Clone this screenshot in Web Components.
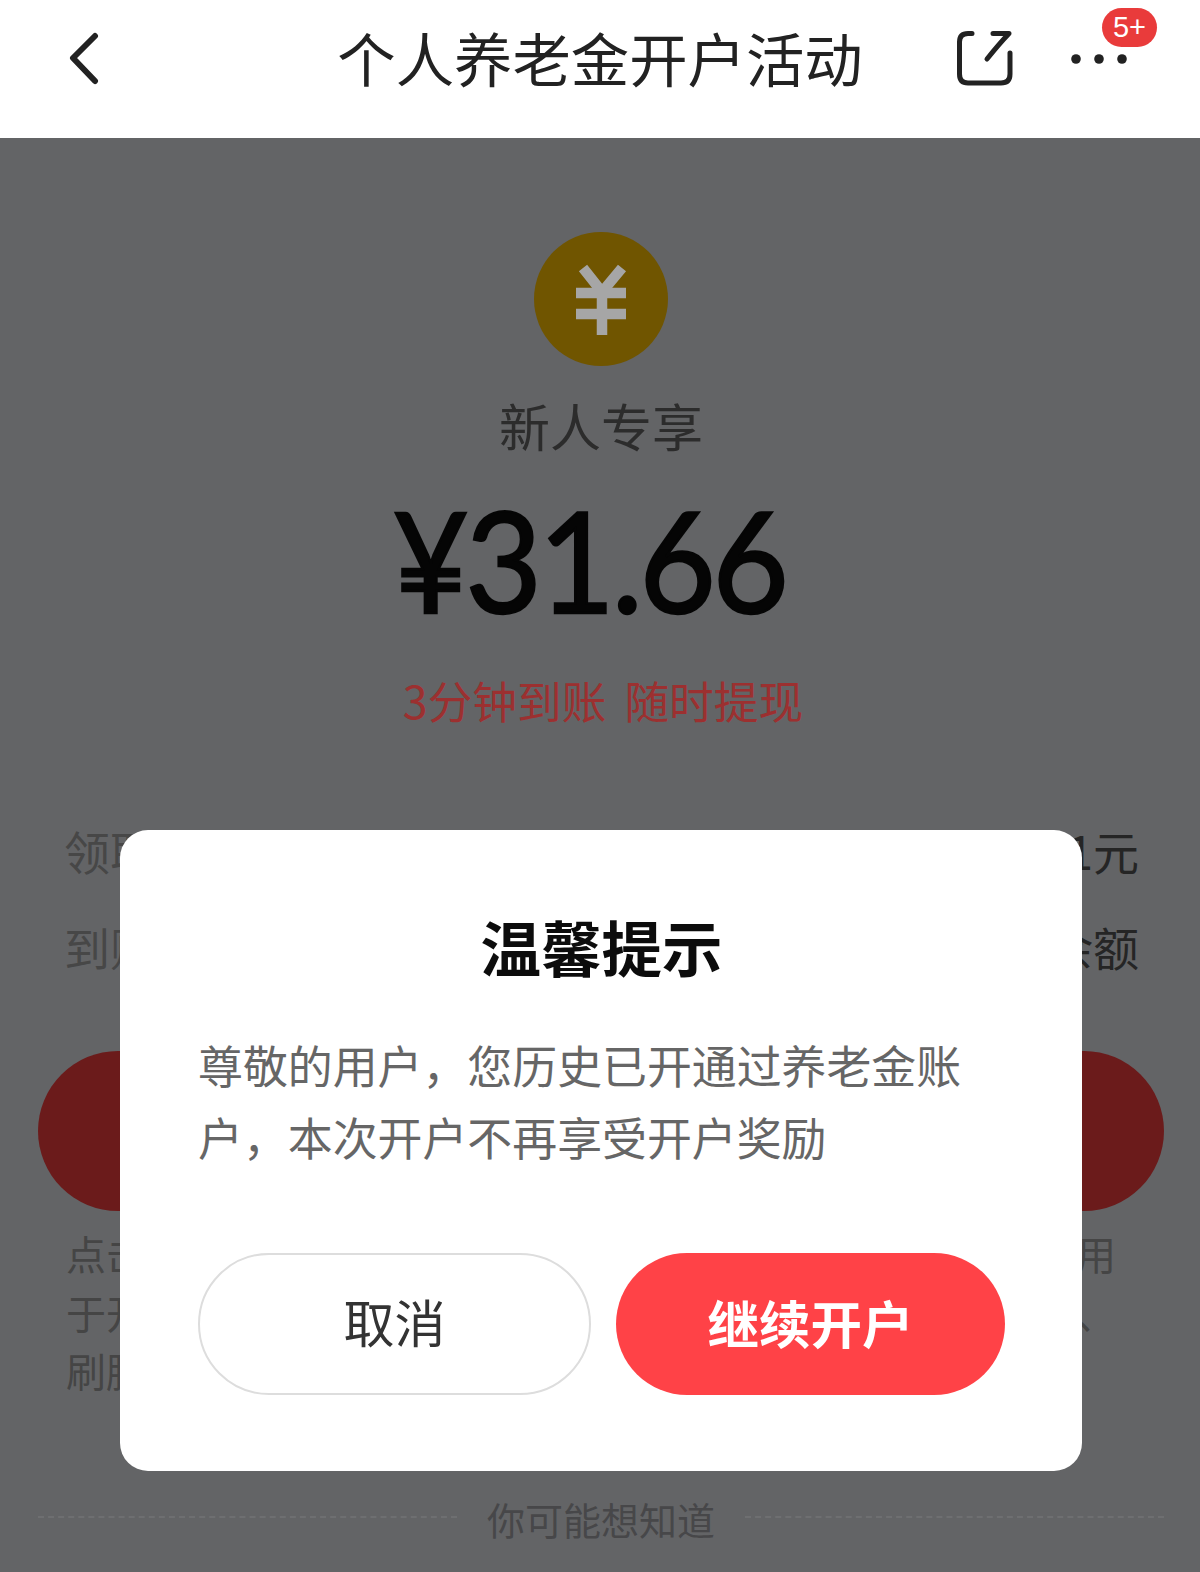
<!doctype html>
<html lang="zh">
<head>
<meta charset="utf-8">
<title>个人养老金开户活动</title>
<style>
	html, body { margin: 0; padding: 0; }
	body {
		width: 1200px;
		height: 1572px;
		overflow: hidden;
		position: relative;
		font-family: "Noto Sans CJK SC", "Noto Sans", sans-serif;
		background: #636466;
	}
</style>
</head>
<body>
	<nav-bar>个人养老金开户活动</nav-bar>
	<promo-hero label="新人专享" amount="¥31.66" note="3分钟到账 随时提现"></promo-hero>
	<info-row first>
		<span slot="start">领取</span>
		<span slot="end">1元</span>
	</info-row>
	<info-row>
		<span slot="start">到账</span>
		<span slot="end">余额</span>
	</info-row>
	<pill-action></pill-action>
	<rule-text>
		<span slot="start">点击</span><span slot="end">用</span>
	</rule-text>
	<rule-text>
		<span slot="start">于开</span><span slot="end">、</span>
	</rule-text>
	<rule-text>
		<span slot="start">刷脸</span>
	</rule-text>
	<section-divider>你可能想知道</section-divider>

	<tip-dialog heading="温馨提示" cancel="取消" confirm="继续开户">
		尊敬的用户，您历史已开通过养老金账户，本次开户不再享受开户奖励
	</tip-dialog>

<script>
class NavBar extends HTMLElement {
	constructor() {
		super();
		this.attachShadow({ mode: "open" });
		this.shadowRoot.innerHTML = `
			<style>
				:host { display: grid; grid-template-columns: 1fr auto 1fr; height: 138px; background: #fff; box-sizing: border-box; }
				.side { display: flex; align-items: flex-start; }
				.back { padding: 32px 0 0 68px; }
				.title { font-size: 58.4px; line-height: 60px; padding-top: 27px; color: #222; white-space: nowrap; }
				.tools { justify-content: flex-end; padding: 30px 48px 0 0; position: relative; }
				svg { display: block; }
				.badge {
					position: absolute; right: 43px; top: 8px; width: 55px; height: 39px; border-radius: 20px;
					background: #e93b3b; color: #fff; font: 29px/39px "Liberation Sans", sans-serif; text-align: center;
				}
			</style>
			<div class="side back">
				<svg width="34" height="54" viewBox="0 0 34 54" fill="none" stroke="#222" stroke-width="6" stroke-linecap="round" stroke-linejoin="round">
					<path d="M27 4 L5 26 L27 49"/>
				</svg>
			</div>
			<div class="title"><slot></slot></div>
			<div class="side tools">
				<svg width="200" height="60" viewBox="0 0 200 60" fill="none" stroke="#222" stroke-width="5" stroke-linecap="round" stroke-linejoin="round">
					<path d="M20 3.5 H16 Q7.5 3.5 7.5 12 V44 Q7.5 53 16 53 H49 Q58 53 58 44 V23"/>
					<path d="M41 3.5 H57 Q47 14 35 29"/>
					<g fill="#222" stroke="none">
						<circle cx="124" cy="29" r="4.8"/>
						<circle cx="147" cy="29" r="4.8"/>
						<circle cx="170" cy="29" r="4.8"/>
					</g>
				</svg>
				<div class="badge">5+</div>
			</div>
		`;
	}
}

class PromoHero extends HTMLElement {
	constructor() {
		super();
		this.attachShadow({ mode: "open" });
		this.shadowRoot.innerHTML = `
			<style>
				:host { display: flex; flex-direction: column; align-items: center; padding-top: 94px; }
				.coin { width: 134px; height: 134px; border-radius: 50%; background: #705500; margin-left: 2px; }
				.coin svg { display: block; }
				.label { font-size: 51px; line-height: 60px; margin-top: 29px; color: #2c2c2c; margin-left: 2px; }
				.amount {
					font: 400 140px/150px Lato, sans-serif; color: #050505; margin: 29px 22px 0 0;
					letter-spacing: -3.5px; white-space: nowrap;
					-webkit-text-stroke: 2.5px #050505;
					transform: scaleX(0.94);
				}
				.note { font-size: 44.7px; line-height: 60px; margin: 36px 0 0 6px; color: #9c3030; white-space: nowrap; word-spacing: 8px; }
			</style>
			<div class="coin">
				<svg width="134" height="134" viewBox="0 0 134 134" fill="none" stroke="#a6a6a6" stroke-width="10.5">
					<path d="M49 36 L68 60 L88 36"/>
					<path d="M42 61 H92 M42 82 H92 M68 58 V103"/>
				</svg>
			</div>
			<div class="label">${this.getAttribute("label")}</div>
			<div class="amount">${this.getAttribute("amount")}</div>
			<div class="note">${this.getAttribute("note")}</div>
		`;
	}
}

class InfoRow extends HTMLElement {
	constructor() {
		super();
		this.attachShadow({ mode: "open" });
		this.shadowRoot.innerHTML = `
			<style>
				:host { display: flex; justify-content: space-between; font-size: 46px; line-height: 60px; padding: 0 61px 0 64px; margin-top: 36px; }
				:host([first]) { margin-top: 90px; }
				.start { color: #474747; }
				.end { color: #252525; }
			</style>
			<span class="start"><slot name="start"></slot></span>
			<span class="end"><slot name="end"></slot></span>
		`;
	}
}

class PillAction extends HTMLElement {
	constructor() {
		super();
		this.attachShadow({ mode: "open" });
		this.shadowRoot.innerHTML = `
			<style>
				:host { display: block; height: 160px; margin: 75px 36px 13px 38px; border-radius: 80px; background: #6b1b1b; }
			</style>
		`;
	}
}

class RuleText extends HTMLElement {
	constructor() {
		super();
		this.attachShadow({ mode: "open" });
		this.shadowRoot.innerHTML = `
			<style>
				:host { display: flex; justify-content: space-between; font-size: 40px; line-height: 58.5px; color: #454545; padding: 0 84px 0 66px; }
			</style>
			<span><slot name="start"></slot></span>
			<span><slot name="end"></slot></span>
		`;
	}
}

class SectionDivider extends HTMLElement {
	constructor() {
		super();
		this.attachShadow({ mode: "open" });
		this.shadowRoot.innerHTML = `
			<style>
				:host { display: flex; align-items: center; gap: 30px; padding: 0 36px 0 38px; margin-top: 94px; color: #474749; font-size: 38px; line-height: 50px; }
				i { flex: 1; border-top: 2px dashed #6e6f71; margin-top: -3px; }
			</style>
			<i></i><span><slot></slot></span><i></i>
		`;
	}
}

class TipDialog extends HTMLElement {
	constructor() {
		super();
		this.attachShadow({ mode: "open" });
		this.shadowRoot.innerHTML = `
			<style>
				:host {
					position: absolute; left: 120px; top: 830px; width: 962px; height: 641px; box-sizing: border-box;
					display: flex; flex-direction: column; padding: 76px 77px 0 78px;
					background: #fff; border-radius: 28px;
				}
				h2 { margin: 0; font-size: 60.5px; line-height: 80px; font-weight: 700; color: #0c0c0c; text-align: center; }
				p { margin: 43px 0 0; font-size: 44.9px; line-height: 71.6px; color: #666; }
				.actions { display: flex; gap: 25px; margin-top: 81px; }
				.btn {
					flex: 1; height: 142px; box-sizing: border-box; border-radius: 71px; padding-bottom: 6px;
					display: flex; align-items: center; justify-content: center; font-size: 51px;
				}
				.cancel { border: 2px solid #ddd; color: #333; }
				.confirm { background: #ff4247; color: #fff; font-weight: 700; font-size: 51.5px; }
			</style>
			<h2>${this.getAttribute("heading")}</h2>
			<p><slot></slot></p>
			<div class="actions">
				<div class="btn cancel">${this.getAttribute("cancel")}</div>
				<div class="btn confirm">${this.getAttribute("confirm")}</div>
			</div>
		`;
	}
}

customElements.define("nav-bar", NavBar);
customElements.define("promo-hero", PromoHero);
customElements.define("info-row", InfoRow);
customElements.define("pill-action", PillAction);
customElements.define("rule-text", RuleText);
customElements.define("section-divider", SectionDivider);
customElements.define("tip-dialog", TipDialog);
</script>
</body>
</html>
